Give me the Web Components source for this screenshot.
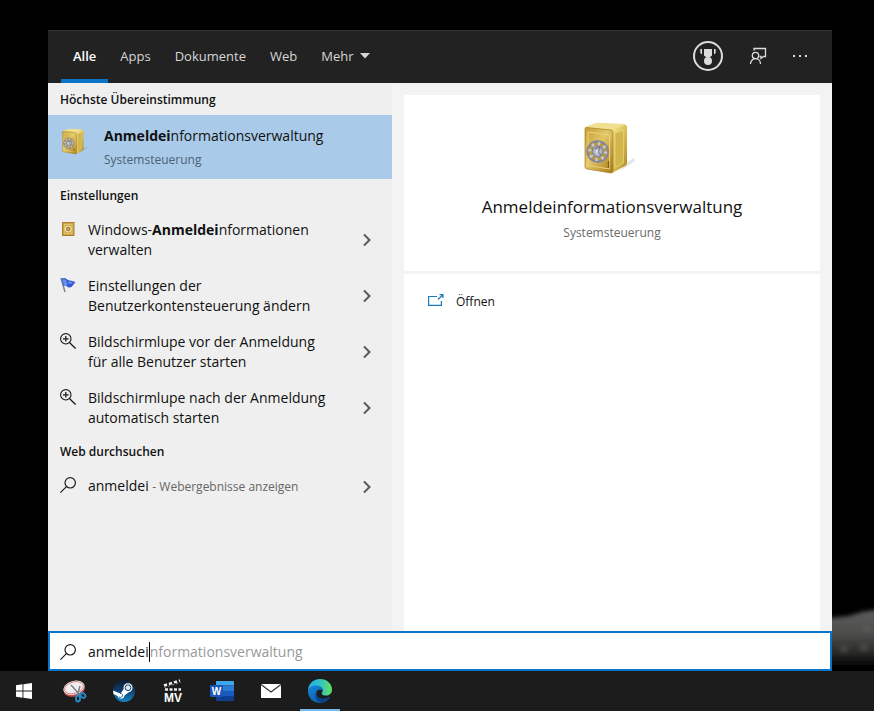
<!DOCTYPE html>
<html lang="de">
<head>
<meta charset="utf-8">
<title>Suche</title>
<style>
    body {
        margin: 0;
        background: #000;
        font-family: "Open Sans", "Noto Sans", sans-serif;
        font-size: 14px;
        line-height: 20px;
        --accent: #0a74c9;
    }
</style>
</head>

<template id="desktop-shell-template">
    <style>
        :host {
            display: flex;
            flex-direction: column;
            min-height: 100vh;
            background: #000;
        }

        main {
            position: relative;
            flex: 1;
            display: flex;
            padding: 30px 42px 0 48px;
        }

        .wallpaper {
            position: absolute;
            right: 0;
            bottom: 0;
        }

        ::slotted(search-panel) {
            position: relative;
            flex: 1;
        }
    </style>
    <main>
        <svg class="wallpaper" width="60" height="80" viewBox="0 0 60 80" aria-hidden="true">
            <defs>
                <filter id="soft" x="-50%" y="-50%" width="200%" height="200%"><feGaussianBlur stdDeviation="2"/></filter>
                <linearGradient id="rock" x1="0" y1="0" x2="0" y2="1">
                    <stop offset="0" stop-color="#5e5e5e"/>
                    <stop offset=".45" stop-color="#4c4c4a"/>
                    <stop offset=".75" stop-color="#2a2a28"/>
                    <stop offset="1" stop-color="#000"/>
                </linearGradient>
            </defs>
            <path d="M-10 30L35 25L48 21L75 17V76H-10Z" fill="url(#rock)" filter="url(#soft)"/>
            <g fill="#6a6a66" opacity=".4" filter="url(#soft)"><circle cx="30" cy="58" r="4"/><circle cx="50" cy="57" r="4"/><circle cx="53" cy="38" r="4"/></g>
        </svg>
        <slot></slot>
    </main>
    <slot name="taskbar"></slot>
</template>

<template id="search-panel-template">
    <style>
        :host {
            display: flex;
            flex-direction: column;
            min-width: 0;
        }

        .body {
            flex: 1;
            display: grid;
            grid-template-columns: 344px 1fr;
            background: #f3f3f3;
        }

        .results {
            background: #efefef;
        }
    </style>
    <slot name="header"></slot>
    <div class="body">
        <div class="results"><slot></slot></div>
        <slot name="preview"></slot>
    </div>
    <slot name="box"></slot>
</template>

<template id="search-header-template">
    <style>
        :host {
            display: flex;
            justify-content: space-between;
            height: 53px;
            box-sizing: border-box;
            padding: 0 17px 0 13px;
            border-top: 1px solid #333;
            background: #222;
            color: #d6d6d6;
        }

        nav, .actions {
            display: flex;
        }

        .actions {
            align-items: center;
            gap: 12px;
            padding-bottom: 2px;
        }

        .actions button {
            display: grid;
            place-items: center;
            width: 30px;
            height: 32px;
            padding: 0;
            border: 0;
            background: none;
            color: #dcdcdc;
        }

        .actions .rewards {
            margin-right: 8px;
        }

        svg {
            display: block;
        }
    </style>
    <nav><slot></slot></nav>
    <div class="actions">
        <button class="rewards" aria-label="Rewards">
            <svg width="30" height="30" viewBox="0 0 30 30" fill="currentColor">
                <circle cx="15" cy="15" r="14" fill="none" stroke="currentColor" stroke-width="2"/>
                <path d="M11 8h8v6.500l-2.200 1.800h-3.600L11 14.500zM7.300 8h1.700v5.500L7.300 12zM21 8h1.700v4L21 13.500z"/>
                <circle cx="15" cy="20" r="4"/>
            </svg>
        </button>
        <button aria-label="Feedback">
            <svg width="18" height="18" viewBox="0 0 18 18" fill="none" stroke="currentColor" stroke-width="1.300">
                <path d="M5 3.500V1.500h11.500v8H14.500l-2.500 2V9.500h-1.500"/>
                <circle cx="6.500" cy="8.500" r="3.200"/>
                <path d="M1.500 17c0-3 2.200-5.300 5-5.300s5 2.300 5 5.300"/>
            </svg>
        </button>
        <button aria-label="Optionen">
            <svg width="16" height="4" viewBox="0 0 16 4" fill="currentColor"><rect x="1" y="1" width="2" height="2"/><rect x="7" y="1" width="2" height="2"/><rect x="13" y="1" width="2" height="2"/></svg>
        </button>
    </div>
</template>

<template id="search-tab-template">
    <style>
        :host {
            display: block;
        }

        button {
            display: flex;
            align-items: center;
            gap: 6px;
            height: 100%;
            padding: 2px 12px 0;
            border: 0;
            border-bottom: 4px solid transparent;
            background: none;
            color: inherit;
            font: inherit;
            font-size: 13px;
        }

        :host([active]) button {
            border-color: var(--accent);
            color: #fff;
            font-weight: 600;
        }

        svg {
            display: none;
        }

        :host([menu]) svg {
            display: block;
        }
    </style>
    <button>
        <slot></slot>
        <svg width="10" height="6" viewBox="0 0 10 6" fill="currentColor"><path d="M0 0h10L5 5.500z"/></svg>
    </button>
</template>

<template id="result-group-template">
    <style>
        :host {
            display: block;
        }

        h2 {
            margin: 0;
            padding: 7px 12px 5px;
            font-size: 12px;
            line-height: 20px;
            font-weight: 600;
            color: #111;
        }
    </style>
    <h2></h2>
    <slot></slot>
</template>

<template id="result-item-template">
    <style>
        :host {
            display: block;
        }

        button {
            display: flex;
            align-items: flex-start;
            gap: 12px;
            width: 100%;
            padding: 9px 20px 7px 12px;
            border: 0;
            background: none;
            color: #111;
            font: inherit;
            text-align: left;
        }

        .text {
            flex: 1;
            padding: 0 16px 0 0;
        }

        .chevron {
            align-self: center;
        }

        app-icon {
            margin-top: 1px;
        }

        ::slotted(small) {
            font-size: 12px;
            color: #666;
        }

        :host([best]) button {
            gap: 14px;
            height: 64px;
            padding: 11px 14px;
            background: #a9cbe9;
        }

        :host([best]) .chevron {
            display: none;
        }

        :host([best]) ::slotted(small) {
            display: block;
            margin-top: 4px;
            color: #4b6175;
        }
    </style>
    <button>
        <app-icon></app-icon>
        <span class="text"><slot></slot></span>
        <svg class="chevron" width="10" height="14" viewBox="0 0 10 14" fill="none" stroke="#5a5a5a" stroke-width="2"><path d="M2 1.500L7.500 7 2 12.500"/></svg>
    </button>
</template>

<template id="result-preview-template">
    <style>
        :host {
            display: flex;
            flex-direction: column;
            gap: 3px;
            padding: 12px 12px 0;
        }

        .card {
            display: flex;
            flex-direction: column;
            align-items: center;
            height: 176px;
            box-sizing: border-box;
            padding-top: 24px;
            background: #fff;
        }

        h1 {
            margin: 18px 0 0;
            font-size: 17px;
            line-height: 28px;
            font-weight: 400;
            color: #111;
        }

        p {
            margin: 2px 0 0;
            font-size: 12px;
            color: #6b6b6b;
        }

        .actions {
            flex: 1;
            padding: 12px;
            background: #fff;
        }

        .actions button {
            display: flex;
            align-items: center;
            gap: 12px;
            width: 100%;
            height: 32px;
            padding: 0 12px;
            border: 0;
            background: none;
            color: #111;
            font: inherit;
            font-size: 12px;
        }
    </style>
    <section class="card">
        <app-icon name="safe" size="56"></app-icon>
        <h1><slot></slot></h1>
        <p><slot name="kind"></slot></p>
    </section>
    <div class="actions">
        <button><app-icon name="open"></app-icon><slot name="action"></slot></button>
    </div>
</template>

<template id="search-box-template">
    <style>
        :host {
            display: block;
        }

        label {
            display: flex;
            align-items: center;
            height: 40px;
            box-sizing: border-box;
            padding: 2px 10px 0;
            border: 2px solid var(--accent);
            background: #fff;
        }

        app-icon {
            margin-right: 12px;
        }

        input {
            field-sizing: content;
            padding: 0;
            border: 0;
            outline: 0;
            background: none;
            color: #111;
            font: inherit;
        }

        .caret {
            width: 1px;
            height: 20px;
            background: #000;
        }

        .hint {
            color: #999;
        }
    </style>
    <label>
        <app-icon name="search"></app-icon>
        <input type="text" aria-label="Suche" spellcheck="false">
        <span class="caret"></span>
        <span class="hint"><slot></slot></span>
    </label>
</template>

<template id="task-bar-template">
    <style>
        :host {
            display: flex;
            gap: 1px;
            height: 40px;
            background: #1c1c1c;
        }

        ::slotted([icon="windows"]) {
            margin-right: 2px;
        }
    </style>
    <slot></slot>
</template>

<template id="task-button-template">
    <style>
        :host {
            display: block;
        }

        button {
            display: grid;
            place-items: center;
            width: 48px;
            height: 40px;
            padding: 0;
            border: 0;
            background: none;
        }

        :host([running]) button {
            background: linear-gradient(#76b9ed, #76b9ed) bottom / 40px 2px no-repeat;
        }
    </style>
    <button><app-icon></app-icon></button>
</template>

<body>
    <desktop-shell>
        <search-panel>
            <search-header slot="header">
                <search-tab active>Alle</search-tab>
                <search-tab>Apps</search-tab>
                <search-tab>Dokumente</search-tab>
                <search-tab>Web</search-tab>
                <search-tab menu>Mehr</search-tab>
            </search-header>

            <result-group heading="Höchste Übereinstimmung">
                <result-item best icon="safe" size="28"><b>Anmeldei</b>nformationsverwaltung<small>Systemsteuerung</small></result-item>
            </result-group>
            <result-group heading="Einstellungen">
                <result-item icon="vault">Windows-<b>Anmeldei</b>nformationen verwalten</result-item>
                <result-item icon="flag">Einstellungen der Benutzerkontensteuerung ändern</result-item>
                <result-item icon="magnifier">Bildschirmlupe vor der Anmeldung für alle Benutzer starten</result-item>
                <result-item icon="magnifier">Bildschirmlupe nach der Anmeldung automatisch starten</result-item>
            </result-group>
            <result-group heading="Web durchsuchen">
                <result-item icon="search">anmeldei <small>- Webergebnisse anzeigen</small></result-item>
            </result-group>

            <result-preview slot="preview">
                Anmeldeinformationsverwaltung
                <span slot="kind">Systemsteuerung</span>
                <span slot="action">Öffnen</span>
            </result-preview>

            <search-box slot="box" value="anmeldei">nformationsverwaltung</search-box>
        </search-panel>

        <task-bar slot="taskbar">
            <task-button icon="windows" label="Start"></task-button>
            <task-button icon="snip" label="Snipping Tool"></task-button>
            <task-button icon="steam" label="Steam"></task-button>
            <task-button icon="movie" label="MV"></task-button>
            <task-button icon="word" label="Word"></task-button>
            <task-button icon="mail" label="Mail"></task-button>
            <task-button icon="edge" label="Edge" running></task-button>
        </task-bar>
    </desktop-shell>
</body>
<script>
    // viewBox, default width and drawing of each icon
    const ICONS = {
        safe: ['4 0 56 56', 32, `
            <defs>
                <linearGradient id="f" x1="0" y1="0" x2="1" y2="1"><stop offset="0" stop-color="#c99e35"/><stop offset=".45" stop-color="#e2c667"/><stop offset="1" stop-color="#a87b18"/></linearGradient>
                <linearGradient id="s" x1="0" y1="0" x2="1" y2="1"><stop offset="0" stop-color="#f3e496"/><stop offset=".5" stop-color="#dcc055"/><stop offset="1" stop-color="#a88424"/></linearGradient>
                <radialGradient id="d"><stop offset="0" stop-color="#e8eaf2"/><stop offset="1" stop-color="#8f92a3"/></radialGradient>
            </defs>
            <path d="M46 44l8-5 1 3-15 10z" fill="#555" opacity=".15"/>
            <path d="M5 8L16 4q1-.5 2-.3L45 5l1.500 2L33 12 7 10z" fill="#efdf8e"/>
            <path d="M32 11l13-5q2 0 2 2v36q0 2-2 3l-13 7z" fill="url(#s)"/>
            <path d="M35 14l8.500-2.500V44L35 48.500z" fill="#d3b64b" stroke="#ead77c" stroke-width=".7"/>
            <path d="M6 8.500l25 2.500q2 .5 2 2v39q0 2-2 2L7 50q-2-.5-2-2V10.500q0-2 1-2z" fill="url(#f)" stroke="#a57e23" stroke-width=".7"/>
            <path d="M8 13l21.500 3v34L8 46.500z" fill="none" stroke="#ead37a"/>
            <circle cx="17.700" cy="32.500" r="10.300" fill="#b79a4c" stroke="#858697" stroke-width="2"/>
            <circle cx="17.700" cy="32.500" r="7.800" fill="none" stroke="#c9cad3" stroke-width="3.600" stroke-dasharray="2.100 4.030"/>
            <circle cx="17.700" cy="32.500" r="5.600" fill="url(#d)" stroke="#777b91" stroke-width=".8"/>
            <path d="M15 30l5-2-1.500 5 3 4" fill="none" stroke="#767d94" stroke-width="1.200"/>
            <path d="M28.500 42v7" stroke="#805c1a" stroke-width="1.300"/>`],
        vault: ['0 0 16 16', 16, `
            <rect x="2.500" y="1.500" width="11.500" height="13" fill="#cda545" stroke="#a98032"/>
            <rect x="4.500" y="3.500" width="7.500" height="9" fill="none" stroke="#e9cf80" stroke-width=".7"/>
            <circle cx="8.300" cy="8" r="3" fill="#bd963e" stroke="#fff2bb"/><circle cx="8.300" cy="8" r="1.300" fill="#efe5bd" stroke="#775d22" stroke-width=".8"/>`],
        flag: ['0 0 16 16', 16, `
            <path d="M1 1l4 14" stroke="#7c8794" stroke-width="1.500"/>
            <path d="M1.500 2q2.500-2 5 0t4 1.500l5 1.500-4 5q-3 1-4.500-.5T3.500 9z" fill="#3158cf"/>
            <path d="M2.500 2.500q2-1 4 1l1 5q-2-1-3.500 0zM9 4l4 1.500-2 1.500-3-.5z" fill="#6691ef"/>`],
        magnifier: ['0 0 16 16', 16, `
            <g fill="none" stroke="#1b1b1b"><circle cx="5.800" cy="5.800" r="5.200" stroke-width="1.100"/><path d="M9.700 9.700L15.600 15.600" stroke-width="1.300"/><path d="M3 5.800h5.600M5.800 3v5.600" stroke-width="1.300"/></g>`],
        search: ['0 0 16 16', 16, `
            <g fill="none" stroke="#1b1b1b" stroke-width="1.200"><circle cx="10.200" cy="5.800" r="5.200"/><path d="M6.400 9.600L.4 15.600"/></g>`],
        open: ['0 0 16 16', 16, `
            <g fill="none" stroke="#1f78b8" stroke-width="1.200"><path d="M9 2.500H.6v8.900h12.800V7M10 5.500L15 .8M11.500 .6h3.400V4"/></g>`],
        windows: ['0 0 16 16', 16, `
            <path fill="#fff" d="M0 2.200L6.500 1.300V7.500H0zM7.400 1.200L16 0v7.500H7.400zM0 8.400h6.500v6.300L0 13.800zM7.400 8.400H16V16l-8.600-1.200z"/>`],
        snip: ['0 0 24 24', 24, `
            <g transform="rotate(-16 11 9)"><ellipse cx="11" cy="10.500" rx="10.800" ry="7" fill="#c84a4e"/><ellipse cx="11" cy="8.700" rx="10.800" ry="6.800" fill="#f2eeee"/><ellipse cx="11" cy="8.700" rx="9.600" ry="5.700" fill="none" stroke="#cf7478" stroke-width=".8"/></g>
            <path d="M8 6l9 10M17 7l-2.500 9" stroke="#758390" stroke-width="1.500"/>
            <g fill="none" stroke="#2787bd" stroke-width="2"><ellipse cx="15" cy="19.500" rx="2" ry="3"/><ellipse cx="20" cy="16.500" rx="2" ry="2.600" transform="rotate(-45 20 16.500)"/></g>`],
        steam: ['0 0 24 24', 24, `
            <defs><linearGradient id="st" x1="0" y1="0" x2="0" y2="1"><stop offset="0" stop-color="#0c1c35"/><stop offset=".5" stop-color="#123f72"/><stop offset="1" stop-color="#1689c4"/></linearGradient></defs>
            <circle cx="12" cy="12" r="11" fill="url(#st)"/>
            <path d="M1 11.500l6.500 2.800 1.500-.3 3-4.500 5 3.500-4.500 3.500q-.5 3-3.500 3.200-2.600 0-3.500-2.700L1.500 15z" fill="#fff"/>
            <circle cx="16" cy="8.700" r="4.500" fill="#fff"/><circle cx="16" cy="8.700" r="2.900" fill="#dfe6ee" stroke="#173f69"/>
            <path d="M7 17.800a2 2 0 1 0 1-3.300" fill="none" stroke="#2573a6"/>`],
        movie: ['0 0 24 24', 24, `
            <path d="M3 6.500L19 1.500" stroke="#eee" stroke-width="2.500" stroke-dasharray="3.200 2" fill="none"/>
            <path d="M4 10.500h16" stroke="#eee" stroke-width="2.500" stroke-dasharray="3 1.500"/>
            <path d="M3.500 8.300L19.500 3.500" stroke="#999" stroke-dasharray="2 2"/>
            <text x="12" y="22.500" text-anchor="middle" font-size="12" font-weight="800" fill="#fff">MV</text>`],
        word: ['0 0 24 24', 24, `
            <path d="M6 2h17q1 0 1 1v3.500H6z" fill="#41a5ee"/><path d="M6 6.500h18v5.500H6z" fill="#2b7cd3"/><path d="M6 12h18v5H6z" fill="#185abd"/><path d="M6 17h18v4q0 1-1 1H6z" fill="#103f91"/>
            <rect y="6" width="13" height="12" rx="1" fill="#1857b7"/>
            <text x="6.500" y="16" text-anchor="middle" font-size="10" font-weight="700" fill="#fff">W</text>`],
        mail: ['0 0 20 14', 20, `
            <path d="M0 0h20v14H0z" fill="#fff"/><path d="M0 .5l10 7.500L20 .5" fill="none" stroke="#333" stroke-width="1.200"/>`],
        edge: ['0 0 24 24', 24, `
            <defs>
                <linearGradient id="e1" x1="0" y1="0" x2="1" y2="0"><stop offset="0" stop-color="#2aa8e8"/><stop offset=".5" stop-color="#2dc4cb"/><stop offset="1" stop-color="#69df58"/></linearGradient>
                <linearGradient id="e2" x1="0" y1="0" x2="1" y2="1"><stop offset="0" stop-color="#1687d9"/><stop offset="1" stop-color="#0b4f96"/></linearGradient>
            </defs>
            <path d="M0 12C0 5 5 0 12 0s12 5 12 10.500c0 4-3 6-6 6-3.500 0-5-1.500-4-3 2-3 0-6-5-6C5 7.500 1 9 0 12z" fill="url(#e1)"/>
            <path d="M0 12c0-3 4-6 9-5.500 4 .5 6 3 5.500 5.500-1-1.500-4-2-5.500 0-2 3 1 8 6 8 3 0 5-1 7-2.500C20 21.500 16 24 12 24 5 24 0 19 0 12z" fill="url(#e2)"/>
            <path d="M9 12c-3 3-2 9 4 11.800 4-.3 7-2.300 9-6.300-2 1.500-4 2.200-7 2.200-5 0-8-4.500-6-7.700z" fill="#0c4288"/>`]
    };

    class BaseElement extends HTMLElement {
        constructor() {
            super();
            const template = document.querySelector(`#${this.localName}-template`);
            this.attachShadow({ mode: 'open' }).appendChild(document.importNode(template.content, true));
        }
    }

    customElements.define('app-icon', class extends HTMLElement {
        constructor() {
            super();
            this.attachShadow({ mode: 'open' });
        }

        static get observedAttributes() {
            return ['name', 'size'];
        }

        attributeChangedCallback() {
            const icon = ICONS[this.getAttribute('name')];
            if (!icon) {
                return;
            }
            const [box, defaultSize, drawing] = icon;
            const [, , w, h] = box.split(' ');
            const width = this.getAttribute('size') || defaultSize;
            this.shadowRoot.innerHTML = `
                <style>:host { display: block; flex: none; } svg { display: block; }</style>
                <svg viewBox="${box}" width="${width}" height="${width * h / w}" aria-hidden="true">${drawing}</svg>`;
        }
    });

    ['desktop-shell', 'search-panel', 'search-header', 'search-tab', 'result-preview', 'task-bar'].forEach((name) => {
        customElements.define(name, class extends BaseElement {});
    });

    customElements.define('result-group', class extends BaseElement {
        connectedCallback() {
            this.shadowRoot.querySelector('h2').textContent = this.getAttribute('heading');
        }
    });

    customElements.define('result-item', class extends BaseElement {
        connectedCallback() {
            const icon = this.shadowRoot.querySelector('app-icon');
            icon.setAttribute('name', this.getAttribute('icon'));
            if (this.hasAttribute('size')) {
                icon.setAttribute('size', this.getAttribute('size'));
            }
        }
    });

    customElements.define('search-box', class extends BaseElement {
        connectedCallback() {
            this.shadowRoot.querySelector('input').value = this.getAttribute('value');
        }
    });

    customElements.define('task-button', class extends BaseElement {
        connectedCallback() {
            this.shadowRoot.querySelector('app-icon').setAttribute('name', this.getAttribute('icon'));
            this.shadowRoot.querySelector('button').setAttribute('aria-label', this.getAttribute('label'));
        }
    });
</script>

</html>
